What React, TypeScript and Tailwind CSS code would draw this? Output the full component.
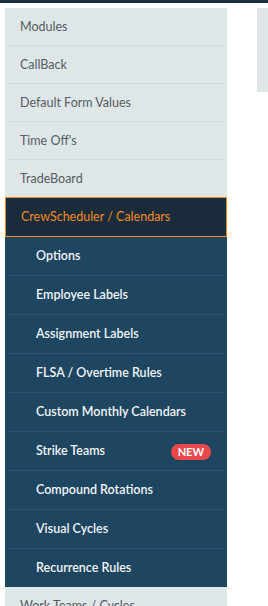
const topLinks = ["Modules", "CallBack", "Default Form Values", "Time Off's", "TradeBoard"];

const subLinks = [
  { name: "Options" },
  { name: "Employee Labels" },
  { name: "Assignment Labels" },
  { name: "FLSA / Overtime Rules" },
  { name: "Custom Monthly Calendars" },
  { name: "Strike Teams", isNew: true },
  { name: "Compound Rotations" },
  { name: "Visual Cycles" },
  { name: "Recurrence Rules" },
];

export default function App() {
  return (
    <div className="h-[606px] w-[268px] overflow-hidden bg-white font-['Lato',sans-serif]">
      <div className="h-[3px] bg-[#1b2d3d]" />
      <div className="flex gap-[30px] pt-[5px] pl-[5px]">
        <nav className="w-[222px] shrink-0 bg-[#dfe6e8]">
          {topLinks.map((name, i) => (
            <div key={name} className={i > 0 ? "mx-[3px] border-t border-[#d2dbde]" : "mx-[3px]"}>
              <a className="flex h-[37px] items-center pt-[2px] pl-[12px] text-[12.5px] text-[#555c62]">{name}</a>
            </div>
          ))}

          <div className="flex h-[40px] items-center border border-[#f28c1c] bg-[#1a2b3c] pt-[1px] pl-[15px] text-[12.5px] text-[#f28c1c]">
            CrewScheduler / Calendars
          </div>

          <div className="bg-[#1f4660]">
            {subLinks.map((link, i) => (
              <div
                key={link.name}
                className={i < subLinks.length - 1 ? "mx-[3px] border-b border-[#2b5472]" : "mx-[3px]"}
              >
                <a className="flex h-[38px] items-center justify-between pt-[1px] pr-[13px] pl-[28px] text-[12.5px] font-semibold text-[#f1f4f6]">
                  <span>{link.name}</span>
                  {link.isNew ? (
                    <span className="rounded-full bg-[#e9484d] px-[7px] py-[1px] text-[11px] leading-[14px] font-bold text-white">
                      NEW
                    </span>
                  ) : null}
                </a>
              </div>
            ))}
          </div>

          <div className="mx-[3px]">
            <a className="flex h-[37px] items-center pt-[2px] pl-[12px] text-[12.5px] text-[#555c62]">Work Teams / Cycles</a>
          </div>
        </nav>

        <div className="h-[84px] flex-1 bg-[#e0e7e9]" />
      </div>
    </div>
  );
}
